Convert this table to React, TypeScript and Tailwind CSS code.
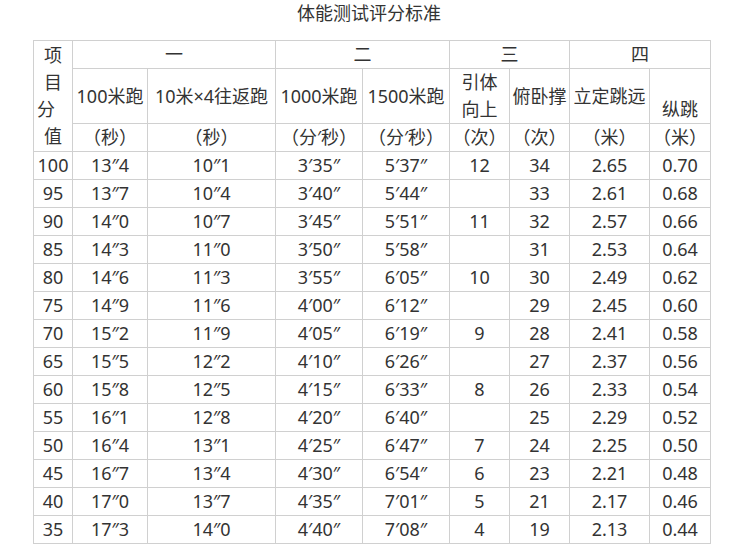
const rows: string[][] = [
  ["100", "13″4", "10″1", "3′35″", "5′37″", "12", "34", "2.65", "0.70"],
  ["95", "13″7", "10″4", "3′40″", "5′44″", "", "33", "2.61", "0.68"],
  ["90", "14″0", "10″7", "3′45″", "5′51″", "11", "32", "2.57", "0.66"],
  ["85", "14″3", "11″0", "3′50″", "5′58″", "", "31", "2.53", "0.64"],
  ["80", "14″6", "11″3", "3′55″", "6′05″", "10", "30", "2.49", "0.62"],
  ["75", "14″9", "11″6", "4′00″", "6′12″", "", "29", "2.45", "0.60"],
  ["70", "15″2", "11″9", "4′05″", "6′19″", "9", "28", "2.41", "0.58"],
  ["65", "15″5", "12″2", "4′10″", "6′26″", "", "27", "2.37", "0.56"],
  ["60", "15″8", "12″5", "4′15″", "6′33″", "8", "26", "2.33", "0.54"],
  ["55", "16″1", "12″8", "4′20″", "6′40″", "", "25", "2.29", "0.52"],
  ["50", "16″4", "13″1", "4′25″", "6′47″", "7", "24", "2.25", "0.50"],
  ["45", "16″7", "13″4", "4′30″", "6′54″", "6", "23", "2.21", "0.48"],
  ["40", "17″0", "13″7", "4′35″", "7′01″", "5", "21", "2.17", "0.46"],
  ["35", "17″3", "14″0", "4′40″", "7′08″", "4", "19", "2.13", "0.44"],
];

const units = ["（秒）", "（秒）", "（分′秒）", "（分′秒）", "（次）", "（次）", "（米）", "（米）"];

const cell = "border border-[#d0d0d0] p-0 text-center align-middle font-normal";

export default function App() {
  return (
    <div
      className="min-h-[556px] w-[738px] bg-white text-[18px] leading-[27px] text-[#333]"
      style={{ fontFamily: '"Noto Sans", "Noto Sans CJK SC", sans-serif' }}
    >
      <div className="text-center">体能测试评分标准</div>

      <table className="ml-[33px] mt-[13px] w-[677px] table-fixed border-collapse">
        <colgroup>
          <col className="w-[39px]" />
          <col className="w-[75px]" />
          <col className="w-[128px]" />
          <col className="w-[87px]" />
          <col className="w-[87px]" />
          <col className="w-[60px]" />
          <col className="w-[60px]" />
          <col className="w-[80px]" />
          <col className="w-[61px]" />
        </colgroup>
        <thead>
          <tr className="h-[28px]">
            <th rowSpan={3} className={cell}>
              <span className="block">项</span>
              <span className="block">目</span>
              <span className="block pr-[14px]">分</span>
              <span className="block">值</span>
            </th>
            <th colSpan={2} className={cell}>一</th>
            <th colSpan={2} className={cell}>二</th>
            <th colSpan={2} className={cell}>三</th>
            <th colSpan={2} className={cell}>四</th>
          </tr>
          <tr className="h-[55px]">
            <th className={cell}>100米跑</th>
            <th className={cell}>10米×4往返跑</th>
            <th className={cell}>1000米跑</th>
            <th className={cell}>1500米跑</th>
            <th className={cell}>
              <span className="block">引体</span>
              <span className="block">向上</span>
            </th>
            <th className={cell}>俯卧撑</th>
            <th className={cell}>立定跳远</th>
            <th className={cell}>
              <span className="block">&nbsp;</span>
              <span className="block">纵跳</span>
            </th>
          </tr>
          <tr className="h-[28px]">
            {units.map((u, i) => (
              <th key={i} className={cell}>
                {u}
              </th>
            ))}
          </tr>
        </thead>
        <tbody>
          {rows.map((r) => (
            <tr key={r[0]} className="h-[28px]">
              {r.map((v, i) => (
                <td key={i} className={cell}>
                  {v}
                </td>
              ))}
            </tr>
          ))}
        </tbody>
      </table>
    </div>
  );
}
